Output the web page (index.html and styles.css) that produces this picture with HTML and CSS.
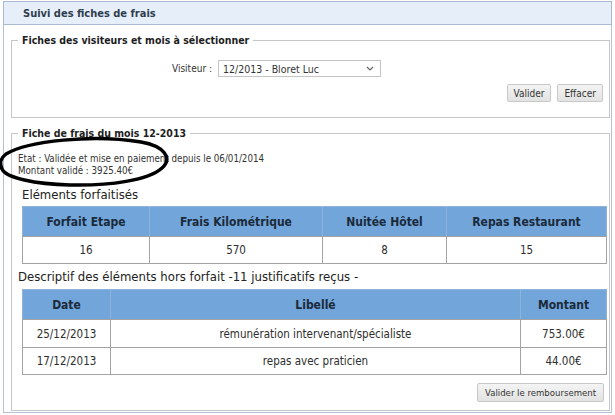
FILE: index.html
```html
<!DOCTYPE html>
<html lang="fr">
<head>
<meta charset="utf-8">
<title>Suivi des fiches de frais</title>
<link rel="stylesheet" href="styles.css">
</head>
<body>
<div class="page">
  <div class="header"><h1>Suivi des fiches de frais</h1></div>
  <div class="content">
    <fieldset class="fs fs-select">
      <legend>Fiches des visiteurs et mois à sélectionner</legend>
      <div class="field-row">
        <label class="lbl">Visiteur :</label>
        <div class="select">
          <span>12/2013 - Bloret Luc</span>
          <svg class="chev" width="8" height="5" viewBox="0 0 8 5"><path d="M1 1 L4 4 L7 1" fill="none" stroke="#666" stroke-width="1.2"/></svg>
        </div>
      </div>
      <div class="actions">
        <button class="btn">Valider</button>
        <button class="btn">Effacer</button>
      </div>
    </fieldset>

    <fieldset class="fs fs-fiche">
      <legend>Fiche de frais du mois 12-2013</legend>
      <p class="etat">Etat : Validée et mise en paiement depuis le 06/01/2014<br>Montant validé : 3925.40€</p>
      <h2 class="sub sub-forfait">Eléments forfaitisés</h2>
      <table class="grid grid-forfait">
        <thead>
          <tr><th class="c1">Forfait Etape</th><th class="c2">Frais Kilométrique</th><th class="c3">Nuitée Hôtel</th><th class="c4">Repas Restaurant</th></tr>
        </thead>
        <tbody>
          <tr><td>16</td><td>570</td><td>8</td><td>15</td></tr>
        </tbody>
      </table>
      <h2 class="sub sub-hf">Descriptif des éléments hors forfait -11 justificatifs reçus -</h2>
      <table class="grid grid-hf">
        <thead>
          <tr><th class="d1">Date</th><th class="d2">Libellé</th><th class="d3">Montant</th></tr>
        </thead>
        <tbody>
          <tr class="r1"><td>25/12/2013</td><td>rémunération intervenant/spécialiste</td><td>753.00€</td></tr>
          <tr class="r2"><td>17/12/2013</td><td>repas avec praticien</td><td>44.00€</td></tr>
        </tbody>
      </table>
      <div class="actions actions-bottom">
        <button class="btn btn-wide">Valider le remboursement</button>
      </div>
    </fieldset>
  </div>
</div>
<svg class="annot" width="615" height="415" viewBox="0 0 615 415">
  <path d="M 6 154 C 28 141, 92 134, 141 142 C 164 146, 173 158, 162 168 C 149 180, 110 186, 70 185 C 35 184, 6 178, 2 169 C -1 162, 1 158, 6 154 Z" fill="none" stroke="#000" stroke-width="3.5" stroke-linecap="round"/>
</svg>
</body>
</html>
```
FILE: styles.css
```css
* { box-sizing: border-box; }

body {
  margin: 0;
  background: #fff;
  font-family: "DejaVu Sans Condensed", "Liberation Sans", sans-serif;
  color: #222;
  position: relative;
}

.page {
  margin: 1px 0 0 3px;
  width: 609px;
  border-left: 1px solid #b3c2d6;
  border-right: 1px solid #b3c2d6;
  border-bottom: 1px solid #b3c2d6;
}

.header {
  margin: 0 -1px;
  height: 24px;
  background: #e6eef9;
  border: 1px solid #a9bad0;
  padding-left: 19px;
  display: flex;
  align-items: center;
}

.header h1 {
  margin: 0;
  font-size: 11px;
  font-weight: bold;
  color: #2e3d4e;
}

.content {
  padding: 0 1px 1px 7px;
}

.fs {
  margin: 8px 0 0 0;
  border: 1px solid #c6c6c6;
  padding: 0 2px 15px 6px;
  min-width: 0;
}

.fs legend {
  padding: 0 4px;
  font-size: 10.5px;
  line-height: 14px;
  font-weight: bold;
  color: #1e1e1e;
}

.field-row {
  display: flex;
  align-items: center;
  gap: 6px;
  padding-left: 154px;
  margin-top: 13px;
}

.lbl {
  font-size: 10px;
  color: #333;
}

.select {
  width: 163px;
  height: 17px;
  border: 1px solid #c4c4c4;
  display: flex;
  align-items: center;
  justify-content: space-between;
  padding: 0 6px 0 4px;
  font-size: 10.5px;
  color: #333;
  background: #fff;
}

.chev { display: block; }

.actions {
  display: flex;
  justify-content: flex-end;
  gap: 6px;
  padding-right: 4px;
  margin-top: 7px;
}

.btn {
  height: 18px;
  padding: 0 6px;
  font-family: inherit;
  font-size: 10px;
  color: #333;
  background: linear-gradient(#f4f4f4, #e2e2e2);
  border: 1px solid #c8c8c8;
  border-radius: 2px;
}

.fs-fiche {
  padding-bottom: 8px;
}

.etat {
  margin: 13px 0 0 0;
  font-size: 9.7px;
  line-height: 12px;
  color: #333;
}

.sub {
  margin: 0;
  font-weight: normal;
  color: #222;
  line-height: 16px;
}

.sub-forfait {
  margin: 10px 0 3px 4px;
  font-size: 13px;
}

.sub-hf {
  margin: 5px 0 4px 0;
  font-size: 13px;
}

.grid {
  margin-left: 4px;
  width: 584px;
  border-collapse: collapse;
  table-layout: fixed;
  border: 1px solid #a3a3a3;
}

.grid th {
  height: 30px;
  background: #72a6db;
  color: #1b2a3a;
  font-size: 12px;
  font-weight: bold;
  text-align: center;
  border: 1px solid #8fb2da;
  border-bottom-color: #a3a3a3;
  padding: 0;
}

.grid td {
  height: 27px;
  text-align: center;
  font-size: 11.5px;
  color: #2e2e2e;
  border: 1px solid #a3a3a3;
  padding: 0;
}

.grid-hf .r1 td { height: 28px; }

.c1 { width: 127px; }
.c2 { width: 173px; }
.c3 { width: 124px; }
.c4 { width: 160px; }

.d1 { width: 88px; }
.d2 { width: 410px; }
.d3 { width: 86px; }

.actions-bottom {
  margin-top: 8px;
  padding-right: 3px;
}

.btn-wide {
  height: 19px;
  padding: 0 7px;
  font-size: 9.5px;
}

.annot {
  position: absolute;
  left: 0;
  top: 0;
  pointer-events: none;
}
```
